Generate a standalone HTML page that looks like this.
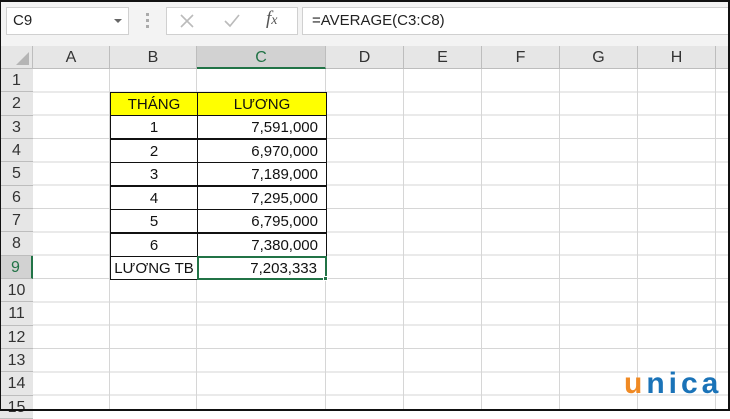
<!DOCTYPE html>
<html><head><meta charset="utf-8"><style>
*{margin:0;padding:0;box-sizing:border-box}
body{width:730px;height:411px;overflow:hidden;background:#fff;font-family:"Liberation Sans",Arial,sans-serif;position:relative}
.a{position:absolute}
#frame{left:0;top:0;width:730px;height:411px;border:2px solid #111;border-left:1px solid #111;z-index:50;pointer-events:none}
.ch{position:absolute;top:46px;height:23px;text-align:center;line-height:23px;font-size:16px;color:#333;border-right:1px solid #bdbdbd}
.rh{position:absolute;left:0;width:33px;text-align:center;font-size:16px;color:#333;line-height:23px;border-bottom:1px solid #bdbdbd;background:#e6e6e6}
.vl{position:absolute;top:69px;width:1px;height:342px;background:#d6d6d6}
.c{position:absolute;font-size:15px;color:#111;line-height:23px;height:24px;border:1px solid #111}
</style></head><body>
<div class="a" style="left:0;top:0;width:730px;height:46px;background:#f3f3f3"></div>
<div class="a" style="left:6px;top:7px;width:123px;height:28px;background:#fff;border:1px solid #d0d0d0;font-size:15px;line-height:26px;padding-left:6px;color:#222">C9</div>
<div class="a" style="left:114px;top:19px;width:0;height:0;border-left:4px solid transparent;border-right:4px solid transparent;border-top:4px solid #666"></div>
<div class="a" style="left:146px;top:13px;width:3px;height:16px;background:repeating-linear-gradient(#aaa 0 3px,transparent 3px 6px)"></div>
<div class="a" style="left:166px;top:7px;width:132px;height:28px;background:#fff;border:1px solid #d0d0d0"></div>
<svg class="a" style="left:178px;top:12px" width="18" height="18"><path d="M3 3L15 15M15 3L3 15" stroke="#bbb" stroke-width="1.6"/></svg>
<svg class="a" style="left:222px;top:12px" width="20" height="18"><path d="M3 9L8 14L17 3" stroke="#bbb" stroke-width="1.6" fill="none"/></svg>
<div class="a" style="left:266px;top:8px;font-family:'Liberation Serif',serif;font-style:italic;font-size:19px;color:#555">f<span style="font-size:14px">x</span></div>
<div class="a" style="left:302px;top:7px;width:428px;height:28px;background:#fff;border:1px solid #d0d0d0;border-right:none;font-size:15px;line-height:26px;padding-left:9px;color:#222">=AVERAGE(C3:C8)</div>
<div class="a" style="left:0;top:46px;width:730px;height:23px;background:#e6e6e6;border-bottom:1px solid #bdbdbd"></div>
<div class="a" style="left:0;top:46px;width:33px;height:23px;border-right:1px solid #bdbdbd"></div>
<div class="a" style="left:16px;top:52px;width:0;height:0;border-left:13px solid transparent;border-bottom:13px solid #b5b5b5"></div>
<div class="ch" style="left:33px;width:77px">A</div>
<div class="ch" style="left:110px;width:87px">B</div>
<div class="ch" style="left:197px;width:129px;background:#d2d2d2;color:#217346;border-bottom:2px solid #217346">C</div>
<div class="ch" style="left:326px;width:78px">D</div>
<div class="ch" style="left:404px;width:78px">E</div>
<div class="ch" style="left:482px;width:78px">F</div>
<div class="ch" style="left:560px;width:78px">G</div>
<div class="ch" style="left:638px;width:78px">H</div>
<div class="a" style="left:33px;top:69px;width:697px;height:342px;background:repeating-linear-gradient(to bottom,transparent 0,transparent 22.33px,#d6d6d6 22.33px,#d6d6d6 23.33px)"></div>
<div class="vl" style="left:109px"></div><div class="vl" style="left:196px"></div><div class="vl" style="left:325px"></div><div class="vl" style="left:403px"></div><div class="vl" style="left:481px"></div><div class="vl" style="left:559px"></div><div class="vl" style="left:637px"></div><div class="vl" style="left:715px"></div>
<div class="a" style="left:32px;top:69px;width:1px;height:342px;background:#bdbdbd"></div>
<div class="rh" style="top:69px;height:23.33px">1</div>
<div class="rh" style="top:92.33px;height:23.33px">2</div>
<div class="rh" style="top:115.67px;height:23.33px">3</div>
<div class="rh" style="top:139px;height:23.33px">4</div>
<div class="rh" style="top:162.33px;height:23.33px">5</div>
<div class="rh" style="top:185.67px;height:23.33px">6</div>
<div class="rh" style="top:209px;height:23.33px">7</div>
<div class="rh" style="top:232.33px;height:23.33px">8</div>
<div class="rh" style="top:255.67px;height:23.33px;background:#d2d2d2;color:#217346;border-right:2px solid #217346">9</div>
<div class="rh" style="top:279px;height:23.33px">10</div>
<div class="rh" style="top:302.33px;height:23.33px">11</div>
<div class="rh" style="top:325.67px;height:23.33px">12</div>
<div class="rh" style="top:349px;height:23.33px">13</div>
<div class="rh" style="top:372.33px;height:23.33px">14</div>
<div class="rh" style="top:395.67px;height:23.33px">15</div>
<div class="c" style="left:110px;top:92px;width:88px;background:#ffff00;text-align:center">THÁNG</div>
<div class="c" style="left:197px;top:92px;width:130px;background:#ffff00;text-align:center">LƯƠNG</div>
<div class="c" style="left:110px;top:115px;width:88px;text-align:center;background:#fff">1</div><div class="c" style="left:197px;top:115px;width:130px;text-align:right;padding-right:8px;background:#fff">7,591,000</div>
<div class="c" style="left:110px;top:138.5px;width:88px;text-align:center;background:#fff">2</div><div class="c" style="left:197px;top:138.5px;width:130px;text-align:right;padding-right:8px;background:#fff">6,970,000</div>
<div class="c" style="left:110px;top:162px;width:88px;text-align:center;background:#fff">3</div><div class="c" style="left:197px;top:162px;width:130px;text-align:right;padding-right:8px;background:#fff">7,189,000</div>
<div class="c" style="left:110px;top:185.5px;width:88px;text-align:center;background:#fff">4</div><div class="c" style="left:197px;top:185.5px;width:130px;text-align:right;padding-right:8px;background:#fff">7,295,000</div>
<div class="c" style="left:110px;top:209px;width:88px;text-align:center;background:#fff">5</div><div class="c" style="left:197px;top:209px;width:130px;text-align:right;padding-right:8px;background:#fff">6,795,000</div>
<div class="c" style="left:110px;top:232.5px;width:88px;text-align:center;background:#fff">6</div><div class="c" style="left:197px;top:232.5px;width:130px;text-align:right;padding-right:8px;background:#fff">7,380,000</div>
<div class="c" style="left:110px;top:256px;width:88px;text-align:center;background:#fff">LƯƠNG TB</div><div class="c" style="left:197px;top:256px;width:130px;text-align:right;padding-right:8px;background:#fff;border:2px solid #217346;line-height:21px">7,203,333</div>
<div class="a" style="left:323px;top:276px;width:5px;height:5px;background:#217346;border:1px solid #fff"></div>
<div class="a" style="left:624px;top:366px;font-size:30px;font-weight:bold;letter-spacing:4px;line-height:36px"><span style="color:#f08a24">u</span><span style="color:#1a73b8">nica</span></div>
<div id="frame" class="a"></div>
</body></html>
